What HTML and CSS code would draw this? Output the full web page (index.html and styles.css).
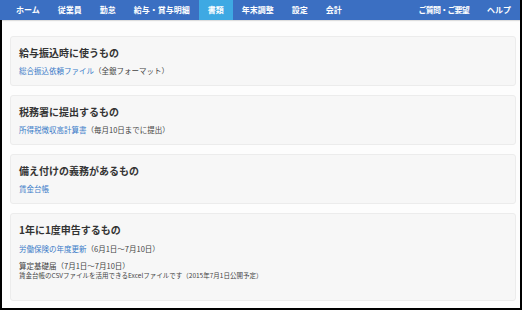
FILE: index.html
```html
<!DOCTYPE html>
<html lang="ja">
<head>
    <meta charset="UTF-8">
    <title>書類</title>
    <link rel="stylesheet" href="styles.css">
</head>
<body>
    <div class="frame">
        <nav class="topnav">
            <ul class="nav-left">
                <li><a href="#">ホーム</a></li>
                <li><a href="#">従業員</a></li>
                <li><a href="#">勤怠</a></li>
                <li><a href="#">給与・賞与明細</a></li>
                <li class="active"><a href="#">書類</a></li>
                <li><a href="#">年末調整</a></li>
                <li><a href="#">設定</a></li>
                <li><a href="#">会計</a></li>
            </ul>
            <ul class="nav-right">
                <li><a href="#">ご質問・ご要望</a></li>
                <li><a href="#">ヘルプ</a></li>
            </ul>
        </nav>
        <div class="page">
            <section class="card">
                <h2>給与振込時に使うもの</h2>
                <p><a href="#">総合振込依頼ファイル</a>（全銀フォーマット）</p>
            </section>
            <section class="card">
                <h2>税務署に提出するもの</h2>
                <p><a href="#">所得税徴収高計算書</a>（毎月10日までに提出）</p>
            </section>
            <section class="card">
                <h2>備え付けの義務があるもの</h2>
                <p><a href="#">賃金台帳</a></p>
            </section>
            <section class="card card-last">
                <h2>1年に1度申告するもの</h2>
                <p><a href="#">労働保険の年度更新</a>（6月1日〜7月10日）</p>
                <p class="item">算定基礎届（7月1日〜7月10日）</p>
                <p class="note">賃金台帳のCSVファイルを活用できるExcelファイルです（2015年7月1日公開予定）</p>
            </section>
        </div>
    </div>
</body>
</html>
```

FILE: styles.css
```css
body {
    margin: 0;
    background-color: #fff;
    font-family: "Noto Sans CJK JP", "Noto Sans", sans-serif;
    color: #444;
}

.frame {
    width: 520px;
    border-right: 2px solid #000;
}

.topnav {
    display: flex;
    justify-content: space-between;
    height: 20px;
    background-color: #3b6fc2;
    padding-left: 7px;
    box-shadow: 0 1px 1px rgba(0, 0, 0, 0.12);
    position: relative;
}

.topnav ul {
    display: flex;
    list-style: none;
    margin: 0;
    padding: 0;
}

.topnav li a {
    display: block;
    padding: 0 9px;
    line-height: 20px;
    font-size: 8px;
    font-weight: bold;
    color: #fff;
    text-decoration: none;
}

.topnav li.active a {
    background-color: #3ea9e3;
}

.nav-right li:first-child a {
    letter-spacing: -0.8px;
}

.page {
    height: 272px;
    border-left: 2px solid #000;
    border-bottom: 2px solid #000;
    background-color: #fdfdfd;
    padding: 16px 4px 0 8px;
}

.card {
    background-color: #f7f7f7;
    border: 1px solid #ececec;
    border-radius: 3px;
    padding: 9px 9px 9px 8px;
    margin-bottom: 9px;
}

.card h2 {
    margin: 0 0 6px;
    font-size: 10px;
    line-height: 14px;
    font-weight: bold;
    color: #333;
}

.card p {
    margin: 0;
    font-size: 7.5px;
    line-height: 10px;
    color: #444;
}

.card p a {
    color: #3a7bc8;
    text-decoration: none;
}

.card-last h2 {
    margin-bottom: 7px;
}

.card p.item {
    margin-top: 7px;
}

.card p.note {
    font-size: 6.5px;
    line-height: 9px;
    margin-bottom: 11px;
}
```
